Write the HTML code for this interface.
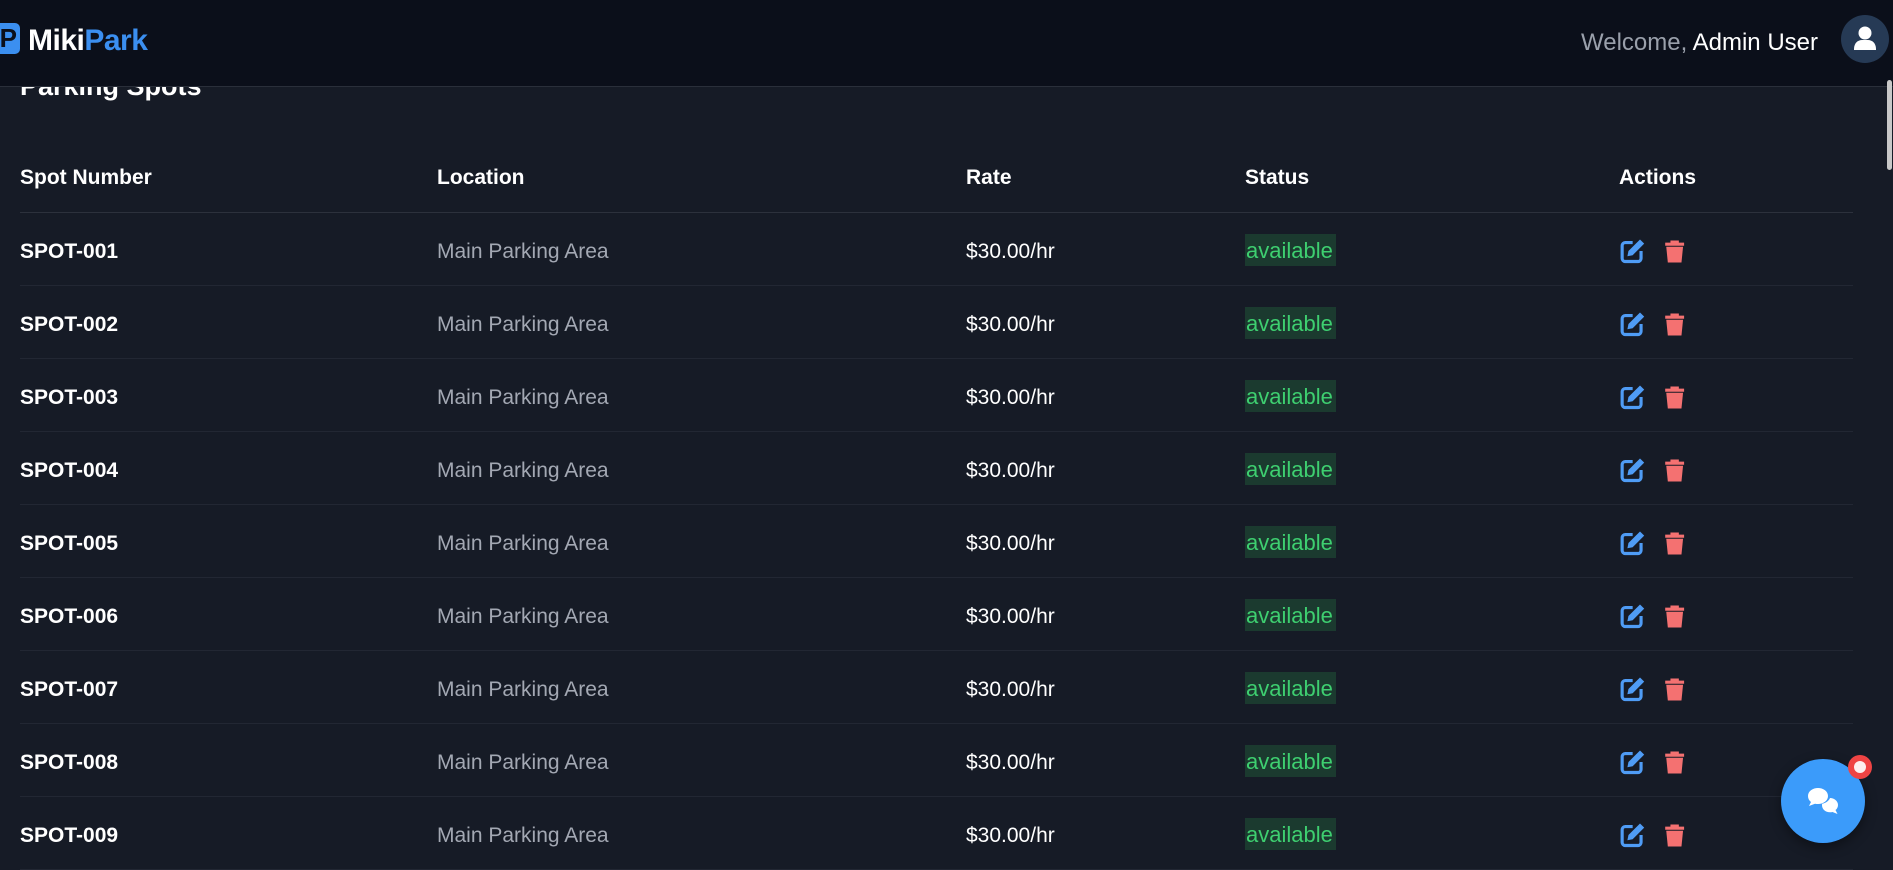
<!DOCTYPE html>
<html><head><meta charset="utf-8"><style>
*{margin:0;padding:0;box-sizing:border-box}
body{width:1893px;height:859px;overflow:hidden;background:#161b26;font-family:"Liberation Sans",sans-serif;color:#fff;position:relative}
.hdr{position:absolute;left:0;top:0;width:1893px;height:87px;background:#0b0f1a;border-bottom:1px solid #2a2f3a;z-index:5}
.title{position:absolute;left:20px;top:71px;font-size:27px;font-weight:bold;color:#fff}
.logo{position:absolute;left:-8px;top:23px;width:28px;height:31px;background:#3b8ff0;border-radius:5px;color:#0b0f1a;font-weight:bold;font-size:26px;line-height:31px;text-align:right;padding-right:3px}
.brand{position:absolute;left:28px;top:24px;font-size:30px;font-weight:bold;letter-spacing:-0.5px}
.brand span{color:#3b8ff0}
.wel{position:absolute;right:75px;top:29px;font-size:24px;color:#9aa0ab}
.wel b{color:#fff;font-weight:normal}
.av{position:absolute;left:1841px;top:15px;width:48px;height:48px;border-radius:50%;background:#263a55}
.sb{position:absolute;left:1887px;top:80px;width:5px;height:90px;background:#c8c8c8;border-radius:3px;z-index:6}
.th,.tr{position:absolute;left:20px;width:1833px}
.th{top:160px;height:53px;border-bottom:1px solid #2c313c;font-weight:bold;font-size:21px}
.th div,.tr div{position:absolute;top:0}
.tr{height:73px;border-bottom:1px solid #222733;font-size:21px}
.c1{left:0}.c2{left:417px}.c3{left:946px}.c4{left:1225px}.c5{left:1599px}
.tr .c1{font-weight:bold;top:27px}
.tr .c2{color:#a3a8b3;top:27px}
.tr .c3{top:27px}
.tr .c4{top:21px;background:#1b3a2f;color:#3ecf70;font-size:22px;height:32px;line-height:33px;padding:0 1px;width:91px}
.tr .c5{top:24px}
.chat{position:absolute;left:1781px;top:759px;width:84px;height:84px;border-radius:50%;background:#3b9bfa;box-shadow:0 4px 12px rgba(0,0,0,.4)}
.dot{position:absolute;left:1848px;top:755px;width:24px;height:24px;border-radius:50%;background:#ef4444}
.dot:after{content:"";position:absolute;left:6px;top:6px;width:12px;height:12px;border-radius:50%;background:#fdf0f0}
</style></head><body>
<div class="title">Parking Spots</div>
<div class="hdr">
<div class="logo">P</div>
<div class="brand">Miki<span>Park</span></div>
<div class="wel">Welcome, <b>Admin User</b></div>
<div class="av"><svg width="48" height="48" viewBox="0 0 48 48"><circle cx="24" cy="18" r="6.5" fill="#fff"/><path d="M13 34c0-6 4-9 8-9h6c4 0 8 3 8 9v1H13z" fill="#fff"/></svg></div>
</div>
<div class="sb"></div>
<div class="th"><div class="c1" style="top:6px">Spot Number</div><div class="c2" style="top:6px">Location</div><div class="c3" style="top:6px">Rate</div><div class="c4" style="top:6px">Status</div><div class="c5" style="top:6px">Actions</div></div>
<div id="rows"></div>
<script>
var h='';for(var i=0;i<9;i++){h+='<div class="tr" style="top:'+(213+i*73)+'px"><div class="c1">SPOT-00'+(i+1)+'</div><div class="c2">Main Parking Area</div><div class="c3">$30.00/hr</div><div class="c4">available</div><div class="c5"><svg width="84" height="28" viewBox="0 0 80 26"><path d="M13 5H6a3 3 0 0 0-3 3v12a3 3 0 0 0 3 3h12a3 3 0 0 0 3-3v-7" fill="none" stroke="#4f9cf5" stroke-width="3"/><path d="M20 2l4 4-11 11-5 1 1-5z" fill="#4f9cf5"/><path d="M44 5h18v3H44z M49 3h8v2h-8z" fill="#f47171"/><path d="M45 9h16l-1.5 15h-13z" fill="#f47171"/></svg></div></div>'}
document.getElementById('rows').innerHTML=h;
</script>
<div class="chat"><svg width="84" height="84" viewBox="0 0 84 84"><path d="M27 37c0-5 5-8 10-8s10 3 10 8-5 8-10 8c-1 0-2 0-3-.3L28 47l2-4c-2-1.5-3-3.5-3-6z" fill="#fff"/><path d="M49 39c4 0 8 3 8 7 0 2-1 4-2.5 5l2 4-5-2c-1 .3-1.5.3-2.5.3-4.5 0-8-3-8-7 0-.5 0-1 .2-1.5 4-.8 7-3.5 7.8-5.8z" fill="#fff"/></svg></div>
<div class="dot"></div>
</body></html>
